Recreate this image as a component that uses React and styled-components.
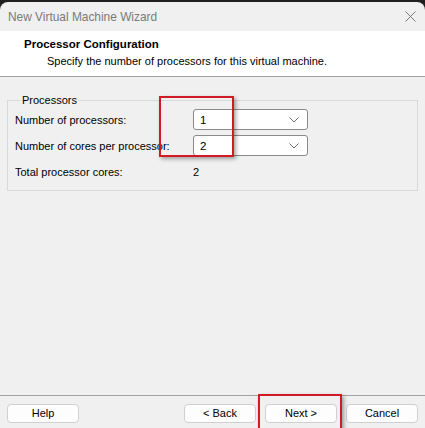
import React from 'react';
import styled, { createGlobalStyle } from 'styled-components';

const GlobalStyle = createGlobalStyle`
  html, body { margin: 0; padding: 0; background: #1f1f1f; }
  body { font-family: "Liberation Sans", Arial, sans-serif; }
`

// dark desktop behind the dialog
const Screen = styled.div`
  width: 425px;
  height: 428px;
  overflow: hidden;
  padding-top: 2px;
  box-sizing: border-box;
  background: #1f1f1f;
`

const Window = styled.div`
  position: relative;
  height: 100%;
  background: #f0f0f0;
  border-radius: 8px 8px 0 0;
  display: flex;
  flex-direction: column;
  font-size: 11px;
  color: #000;
`

const TitleBar = styled.div`
  height: 29px;
  flex: none;
  display: flex;
  align-items: center;
  justify-content: space-between;
  padding: 0 9px 0 8px;
  color: #7a7a7a;
  font-size: 11.9px;
`

const Header = styled.div`
  height: 46px;
  flex: none;
  box-sizing: border-box;
  background: #fff;
  border-bottom: 1px solid #a0a0a0;
  padding: 5px 0 0 24px;
  line-height: 17px;
`
const Heading = styled.div`
  font-weight: bold;
  font-size: 11.5px;
`
const SubHeading = styled.div`
  padding-left: 23px;
`

const Body = styled.div`
  flex: 1;
  padding: 15px 7px 0 7px;
`

const GroupBox = styled.fieldset`
  margin: 0;
  padding: 1px 7px 8px 7px;
  border: 1px solid #d9d9d9;
`
const GroupTitle = styled.legend`
  padding: 0 1px;
  margin-left: 6px;
  line-height: 16px;
`

const Rows = styled.div`
  display: grid;
  grid-template-columns: 178px 115px;
  grid-auto-rows: 21px;
  row-gap: 5px;
  align-items: center;
`

const Label = styled.div`
  white-space: nowrap;
`

const Select = styled.div`
  height: 21px;
  box-sizing: border-box;
  background: #fff;
  border: 1px solid #8a8a8a;
  border-radius: 3px;
  display: flex;
  align-items: center;
  justify-content: space-between;
  padding: 0 8px 0 6px;
  font-size: 11.5px;
`

const Footer = styled.div`
  height: 33px;
  flex: none;
  box-sizing: border-box;
  border-top: 1px solid #a0a0a0;
  padding: 8px 7px 0 7px;
  display: flex;
  gap: 9px;
`
const Spacer = styled.div`
  flex: 1;
`
const Button = styled.button`
  width: 72px;
  height: 19px;
  padding: 0;
  box-sizing: border-box;
  border: 1px solid #d0d0d0;
  border-radius: 4px;
  background: #fdfdfd;
  font: inherit;
  color: #000;
  line-height: 17px;
`

// red annotation boxes drawn over the screenshot
const Mark = styled.div`
  position: absolute;
  left: ${p => p.$x}px;
  top: ${p => p.$y}px;
  width: ${p => p.$w}px;
  height: ${p => p.$h}px;
  box-sizing: border-box;
  border: 2px solid #d11a24;
  box-shadow: 2px 2px 4px rgba(0, 0, 0, 0.35);
  pointer-events: none;
`

const Chevron = () => (
  <svg width="10" height="6" viewBox="0 0 10 6">
    <path d="M0.5 0.5 L5 5 L9.5 0.5" fill="none" stroke="#6e6e6e" strokeWidth="1" />
  </svg>
)

const CloseIcon = () => (
  <svg width="11" height="11" viewBox="0 0 11 11">
    <path d="M0.5 0.5 L10.5 10.5 M10.5 0.5 L0.5 10.5" stroke="#7a7a7a" strokeWidth="1" />
  </svg>
)

export default function App() {
  return (
    <Screen>
      <GlobalStyle />
      <Window>
        <TitleBar>
          <span>New Virtual Machine Wizard</span>
          <CloseIcon />
        </TitleBar>
        <Header>
          <Heading>Processor Configuration</Heading>
          <SubHeading>Specify the number of processors for this virtual machine.</SubHeading>
        </Header>
        <Body>
          <GroupBox>
            <GroupTitle>Processors</GroupTitle>
            <Rows>
              <Label>Number of processors:</Label>
              <Select><span>1</span><Chevron /></Select>
              <Label>Number of cores per processor:</Label>
              <Select><span>2</span><Chevron /></Select>
              <Label>Total processor cores:</Label>
              <div>2</div>
            </Rows>
          </GroupBox>
        </Body>
        <Footer>
          <Button>Help</Button>
          <Spacer />
          <Button>&lt; Back</Button>
          <Button>Next &gt;</Button>
          <Button>Cancel</Button>
        </Footer>
        <Mark $x={159} $y={94} $w={75} $h={61} />
        <Mark $x={258} $y={392} $w={84} $h={40} />
      </Window>
    </Screen>
  );
}
